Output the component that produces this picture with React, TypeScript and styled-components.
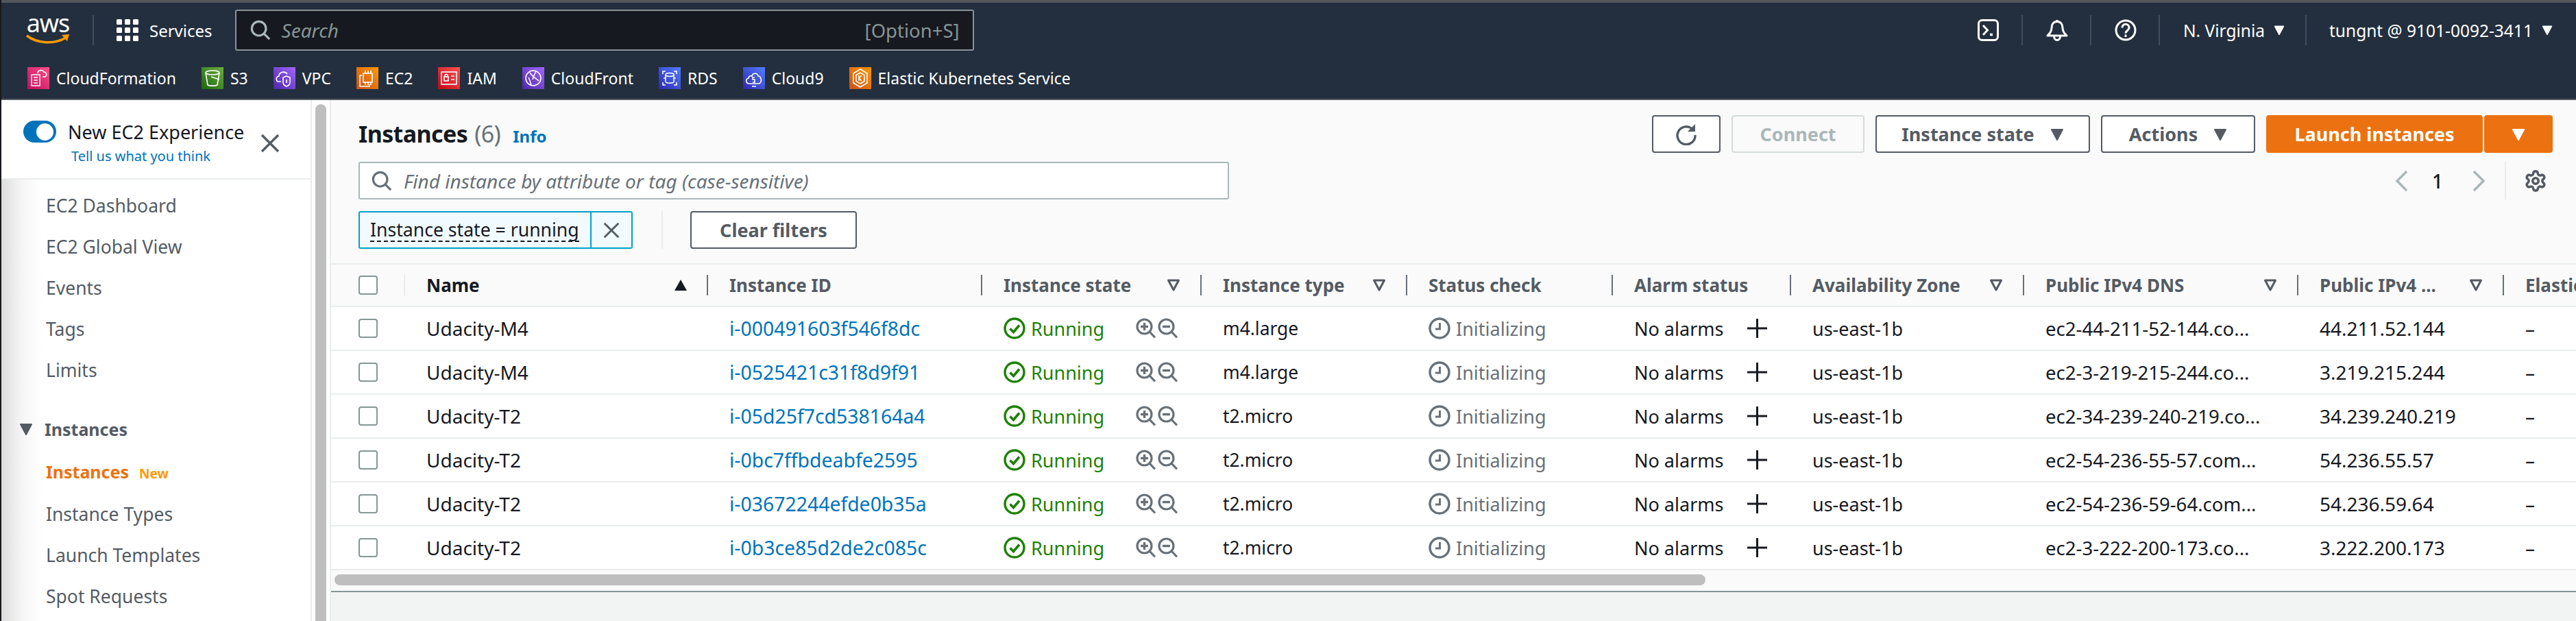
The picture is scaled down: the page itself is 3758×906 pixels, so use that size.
import React from "react";
import styled, { createGlobalStyle } from "styled-components";
import { Settings } from "lucide-react";

const FONT = `"Noto Sans", "Open Sans", sans-serif`;

const GlobalStyle = createGlobalStyle`
  html, body { margin: 0; padding: 0; height: 100%; overflow: hidden; background: #fff; }
  * { box-sizing: border-box; }
  body { font-family: ${FONT}; }
`;

const Page = styled.div`
  width: 3758px;
  height: 906px;
  display: flex;
  flex-direction: column;
  overflow: hidden;
  border-left: 2px solid #17191d;
`;

/* ---------- top navigation ---------- */
const Header = styled.header`
  height: 146px;
  flex: none;
  background: #232f3e;
  border-top: 4px solid #55565a;
  border-bottom: 2px solid #545b64;
`;
const NavTop = styled.div`
  height: 80px;
  display: flex;
  align-items: center;
  padding-left: 36px;
`;
const Logo = styled.div`
  width: 64px;
  display: flex;
  flex-direction: column;
  align-items: center;
  margin-right: 33px;
  color: #fff;
  font-size: 36px;
  line-height: 30px;
  letter-spacing: -1px;
  span { display: block; margin-top: -6px; }
  svg { display: block; margin-top: 1px; }
`;
const NavDivider = styled.div`
  width: 2px;
  height: 44px;
  background: #414d5c;
  flex: none;
`;
const ServicesButton = styled.div`
  display: flex;
  align-items: center;
  gap: 16px;
  margin-left: 33px;
  color: #fff;
  font-size: 24px;
`;
const SearchBox = styled.div`
  margin-left: 33px;
  width: 1078px;
  height: 60px;
  background: #16191f;
  border: 2px solid #879596;
  border-radius: 3px;
  display: flex;
  align-items: center;
  padding: 0 19px 0 20px;
  color: #879596;
  font-size: 27.5px;
  em { margin-left: 16px; font-style: italic; flex: 1; font-size: 28px; }
`;
const NavRight = styled.div`
  margin-left: auto;
  display: flex;
  align-items: center;
`;
const NavCell = styled.div<{ $width: number; $last?: boolean }>`
  width: ${(p) => p.$width}px;
  height: 44px;
  display: flex;
  align-items: center;
  gap: 13px;
  padding-left: ${(p) => (p.$last ? 33 : 34)}px;
  color: #fff;
  font-size: 24.5px;
  white-space: nowrap;
  border-right: ${(p) => (p.$last ? "none" : "2px solid #414d5c")};
`;
const FavBar = styled.div`
  height: 60px;
  display: flex;
  align-items: center;
  gap: 37px;
  padding-left: 38px;
`;
const Fav = styled.div`
  display: flex;
  align-items: center;
  gap: 10px;
  color: #fff;
  font-size: 23px;
  white-space: nowrap;
`;
const FavIcon = styled.span<{ $from: string; $to: string }>`
  width: 32px;
  height: 32px;
  display: block;
  background: linear-gradient(45deg, ${(p) => p.$from}, ${(p) => p.$to});
  svg { display: block; }
`;

/* ---------- body ---------- */
const Body = styled.div`
  flex: 1;
  display: flex;
  min-height: 0;
`;
const Sidebar = styled.aside`
  width: 453px;
  flex: none;
  background: #fff;
  border-right: 2px solid #eaeded;
  display: flex;
  flex-direction: column;
`;
const Banner = styled.div`
  height: 116px;
  flex: none;
  border-bottom: 2px solid #eaeded;
  display: flex;
  padding: 30px 0 0 32px;
`;
const Toggle = styled.div`
  width: 48px;
  height: 32px;
  flex: none;
  border-radius: 16px;
  background: #0073bb;
  display: flex;
  align-items: center;
  justify-content: flex-end;
  padding-right: 4px;
  &::after {
    content: "";
    width: 25px;
    height: 25px;
    border-radius: 50%;
    background: #fff;
  }
`;
const BannerText = styled.div`
  margin-left: 17px;
  width: 281px;
  font-size: 27px;
  line-height: 34px;
  white-space: nowrap;
  color: #16191f;
  a {
    display: block;
    margin: 3px 0 0 5px;
    font-size: 20px;
    line-height: 30px;
    color: #0073bb;
  }
`;
const BannerClose = styled.div`
  margin-top: 19px;
  color: #545b64;
  svg { display: block; }
`;
const SideNav = styled.nav`
  flex: 1;
  padding-top: 8px;
  background: linear-gradient(90deg, #dcdcdc 0, #f6f6f6 30px, #fff 60px);
  overflow: hidden;
`;
const SideItem = styled.div<{ $active?: boolean }>`
  height: ${(p) => (p.$active ? 64 : 60)}px;
  display: flex;
  align-items: center;
  padding-left: 65px;
  font-size: ${(p) => (p.$active ? 25 : 26.5)}px;
  font-weight: ${(p) => (p.$active ? 700 : 400)};
  color: ${(p) => (p.$active ? "#ec7211" : "#545b64")};
  small {
    margin-left: 15px;
    font-size: 19px;
    font-weight: 700;
    color: #ff9900;
    transform: translateY(3px);
  }
`;
const SideSection = styled.div`
  height: 60px;
  margin-top: 26px;
  display: flex;
  align-items: center;
  gap: 17px;
  padding-left: 26px;
  font-size: 25px;
  font-weight: 700;
  color: #545b64;
`;
const Gutter = styled.div`
  width: 28px;
  flex: none;
  padding: 6px 6px 0 5px;
  background: #fff;
  border-right: 2px solid #eaeded;
`;
const GutterThumb = styled.div`
  height: 100%;
  width: 16px;
  border-radius: 8px 8px 0 0;
  background: #bebebe;
`;

/* ---------- main ---------- */
const Main = styled.main`
  flex: 1;
  min-width: 0;
  display: flex;
  flex-direction: column;
  background: #f2f3f3;
`;
const Panel = styled.section`
  background: #fafafa;
  border-bottom: 2px solid #879596;
  height: 718px;
  flex: none;
`;
const Controls = styled.div`
  padding: 22px 34px 21px 40px;
`;
const TitleRow = styled.div`
  display: flex;
  align-items: center;
  height: 55px;
`;
const Title = styled.h1`
  margin: 0;
  font-size: 34px;
  line-height: 55px;
  font-weight: 700;
  letter-spacing: -0.6px;
  color: #16191f;
  span { font-weight: 400; color: #687078; margin-left: 10px; }
`;
const InfoLink = styled.a`
  margin: 6px 0 0 18px;
  font-size: 24px;
  font-weight: 700;
  color: #0073bb;
`;
const Actions = styled.div`
  margin-left: auto;
  display: flex;
  gap: 16px;
`;
const Button = styled.div<{ $variant?: "normal" | "disabled" | "primary"; $width: number }>`
  width: ${(p) => p.$width}px;
  height: 55px;
  display: flex;
  align-items: center;
  justify-content: center;
  gap: 23px;
  border-radius: 4px;
  font-size: 27px;
  font-weight: 700;
  white-space: nowrap;
  background: ${(p) => (p.$variant === "primary" ? "#ec7211" : p.$variant === "disabled" ? "#fafafa" : "#fff")};
  color: ${(p) => (p.$variant === "primary" ? "#fff" : p.$variant === "disabled" ? "#aab7b8" : "#545b64")};
  border: 2px solid ${(p) => (p.$variant === "primary" ? "#ec7211" : p.$variant === "disabled" ? "#d5dbdb" : "#545b64")};
`;
const SplitButton = styled.div`
  display: flex;
  gap: 2px;
`;
const FilterRow = styled.div`
  margin-top: 13px;
  display: flex;
  align-items: center;
  height: 55px;
`;
const FindInput = styled.div`
  width: 1270px;
  height: 55px;
  background: #fff;
  border: 2px solid #aab7b8;
  border-radius: 3px;
  display: flex;
  align-items: center;
  gap: 17px;
  padding-left: 17px;
  color: #687078;
  font-size: 28px;
  font-style: italic;
`;
const Pager = styled.div`
  margin-left: auto;
  display: flex;
  align-items: center;
  height: 55px;
  font-size: 28px;
  font-weight: 500;
  color: #16191f;
  b { font-weight: 500; margin: 0 43px 0 35px; }
`;
const PagerGear = styled.div`
  margin-left: 28px;
  height: 55px;
  border-left: 2px solid #eaeded;
  padding: 0 8px 0 26px;
  display: flex;
  align-items: center;
  color: #545b64;
`;
const TokenRow = styled.div`
  margin-top: 17px;
  display: flex;
  align-items: center;
  height: 55px;
`;
const Token = styled.div`
  width: 400px;
  height: 55px;
  display: flex;
  background: #f1faff;
  border: 2px solid #00a1c9;
  border-radius: 3px;
  color: #16191f;
  font-size: 26.6px;
`;
const TokenLabel = styled.div`
  width: 338px;
  padding-left: 15px;
  border-right: 2px solid #00a1c9;
  display: flex;
  align-items: center;
  white-space: nowrap;
  span { border-bottom: 2px dashed #16191f; line-height: 32px; }
`;
const TokenClose = styled.div`
  flex: 1;
  display: flex;
  align-items: center;
  justify-content: center;
  color: #545b64;
`;
const TokenDivider = styled.div`
  width: 2px;
  height: 55px;
  margin: 0 40px 0 42px;
  background: #eaeded;
`;

const TableScroll = styled.div`
  overflow: hidden;
  border-top: 2px solid #eaeded;
`;
const Grid = styled.div`
  display: grid;
  grid-template-columns: 106px 442px 400px 320px 300px 300px 260px 340px 400px 300px 300px;
  width: 3270px;
`;
const HeadCell = styled.div<{ $dark?: boolean; $light?: boolean }>`
  height: 62px;
  display: flex;
  align-items: center;
  padding-right: 29px;
  border-bottom: 2px solid #eaeded;
  background: #fafafa;
  font-size: 26px;
  font-weight: 700;
  white-space: nowrap;
  color: ${(p) => (p.$dark ? "#16191f" : "#545b64")};
  &::before {
    content: "";
    width: 2px;
    height: 30px;
    flex: none;
    margin-right: 31px;
    background: ${(p) => (p.$light ? "#eaeded" : "#687078")};
  }
  svg { margin-left: auto; flex: none; }
`;
const CheckCell = styled.div<{ $head?: boolean }>`
  height: ${(p) => (p.$head ? 62 : 64)}px;
  display: flex;
  align-items: center;
  padding-left: 40px;
  border-bottom: 2px solid #eaeded;
  background: ${(p) => (p.$head ? "#fafafa" : "#fff")};
`;
const Checkbox = styled.div`
  width: 28px;
  height: 28px;
  background: #fff;
  border: 2px solid #879596;
  border-radius: 4px;
`;
const Cell = styled.div<{ $tone?: "link" | "ok" | "muted"; $size?: number }>`
  height: 64px;
  display: flex;
  align-items: center;
  padding-left: 33px;
  border-bottom: 2px solid #eaeded;
  background: #fff;
  font-size: ${(p) => p.$size ?? 28}px;
  white-space: nowrap;
  overflow: hidden;
  color: ${(p) => (p.$tone === "link" ? "#0073bb" : p.$tone === "ok" ? "#1d8102" : p.$tone === "muted" ? "#687078" : "#16191f")};
  svg { flex: none; }
`;
const StatusLabel = styled.span`
  margin-left: 8px;
  font-size: 27px;
`;
const ZoomIcons = styled.span`
  margin: 0 33px 0 auto;
  display: flex;
  gap: 3px;
  color: #687078;
`;
const PlusIcon = styled.span`
  margin: 0 33px 0 auto;
  color: #16191f;
  svg { display: block; }
`;
const ScrollTrack = styled.div`
  padding: 6px 0 6px 5px;
`;
const ScrollThumb = styled.div`
  width: 2000px;
  height: 16px;
  border-radius: 8px;
  background: #bebebe;
`;

/* ---------- drawings ---------- */
const Caret = ({ color = "currentColor", w = 20 }: { color?: string; w?: number }) => (
  <svg width={w} height={w} viewBox="0 0 20 20" fill={color} stroke={color} strokeWidth="2" strokeLinejoin="round">
    <path d="M2 3h16l-8 15z" />
  </svg>
);
const FilterIcon = () => (
  <svg width="20" height="20" viewBox="0 0 20 20" fill="none" stroke="#545b64" strokeWidth="3" strokeLinejoin="round">
    <path d="M2.500 3h15L10 17z" />
  </svg>
);
const SortUp = () => (
  <svg width="18" height="18" viewBox="0 0 18 18" fill="#16191f">
    <path d="M9 1l9 16H0z" />
  </svg>
);
const Magnifier = ({ size = 32, color = "currentColor" }: { size?: number; color?: string }) => (
  <svg width={size} height={size} viewBox="0 0 32 32" fill="none" stroke={color} strokeWidth="3.400">
    <circle cx="13.500" cy="13.500" r="11" />
    <path d="M21.500 21.500L30 30" />
  </svg>
);
const CloseX = ({ size = 28 }: { size?: number }) => (
  <svg width={size} height={size} viewBox="0 0 28 28" fill="none" stroke="currentColor" strokeWidth="3.400">
    <path d="M2 2l24 24M26 2L2 26" />
  </svg>
);
const CheckCircle = () => (
  <svg width="32" height="32" viewBox="0 0 32 32" fill="none" stroke="#1d8102" strokeWidth="3.400">
    <circle cx="16" cy="16" r="14" />
    <path d="M9.500 16.500l5 5 8.500-10" strokeWidth="3.600" />
  </svg>
);
const ClockCircle = () => (
  <svg width="32" height="32" viewBox="0 0 32 32" fill="none" stroke="#687078" strokeWidth="3.400">
    <circle cx="16" cy="16" r="14" />
    <path d="M16.500 8v9H10" strokeWidth="3" />
  </svg>
);
const ZoomGlass = ({ plus }: { plus?: boolean }) => (
  <svg width="29" height="30" viewBox="0 0 29 30" fill="none" stroke="currentColor" strokeWidth="3.200">
    <circle cx="12.500" cy="12.500" r="10.500" />
    <path d="M20 20l8 8.500" />
    <path d="M7 12.500h11" strokeWidth="3.400" />
    {plus && <path d="M12.500 7v11" strokeWidth="3.400" />}
  </svg>
);
const PlusGlyph = () => (
  <svg width="29" height="28" viewBox="0 0 29 28" fill="none" stroke="currentColor" strokeWidth="3">
    <path d="M14.500 0v28M0 14h29" />
  </svg>
);
const GridDots = () => (
  <svg width="32" height="32" viewBox="0 0 32 32" fill="#fff">
    {[0, 12, 24].flatMap((y) =>
      [0, 12, 24].map((x) => <rect key={`${x}-${y}`} x={x} y={y} width="8" height="8" rx="1.500" />)
    )}
  </svg>
);
const TerminalIcon = () => (
  <svg width="31" height="32" viewBox="0 0 31 32" fill="none" stroke="#fff" strokeWidth="3">
    <rect x="1.500" y="1.500" width="28" height="29" rx="5" />
    <path d="M8 9l6.500 7L8 23" />
    <path d="M18 22.500h4" strokeWidth="3.500" />
  </svg>
);
const BellIcon = () => (
  <svg width="32" height="32" viewBox="0 0 32 32" fill="none" stroke="#fff" strokeWidth="3" strokeLinejoin="round">
    <path d="M16 3.500c-5.500 0-8 4-8 9 0 5-2 8-6 11.500h28c-4-3.500-6-6.500-6-11.500 0-5-2.500-9-8-9z" />
    <path d="M16 1v3M11.500 24.500c0 8 9 8 9 0" />
  </svg>
);
const HelpIcon = () => (
  <svg width="32" height="32" viewBox="0 0 32 32" fill="none" stroke="#fff" strokeWidth="3">
    <circle cx="16" cy="16" r="14" />
    <path d="M11 12.500c0-7 10-7 10 0 0 4-5 4-5 8" />
    <path d="M16 22.500v3.500" />
  </svg>
);
const RefreshIcon = () => (
  <svg width="32" height="32" viewBox="0 0 32 32" fill="none" stroke="#545b64" strokeWidth="3.400">
    <path d="M24 7.500A13 13 0 1 0 29 17" />
    <path d="M29 1v11H18z" fill="#545b64" stroke="none" />
  </svg>
);
const Chevron = ({ dir }: { dir: "left" | "right" }) => (
  <svg width="19" height="32" viewBox="0 0 19 32" fill="none" stroke="#aab7b8" strokeWidth="3.500">
    <path d={dir === "left" ? "M17 2L3 16l14 14" : "M2 2l14 14L2 30"} />
  </svg>
);

const glyph: Record<string, React.ReactNode> = {
  CloudFormation: (
    <>
      <path d="M6 11h12v16H6zM9 15h6M9 19h6M9 23h6" />
      <path d="M15 9c0-5 7-6 9-2 4 0 5 5 2 7h-4" />
    </>
  ),
  S3: (
    <>
      <path d="M6 8l3 18c2 1.500 12 1.500 14 0l3-18" />
      <ellipse cx="16" cy="8" rx="10" ry="3" />
      <path d="M14 14l12 4" />
    </>
  ),
  VPC: (
    <>
      <path d="M11 21H8c-5 0-5-7 0-8 0-6 9-8 12-3" />
      <path d="M19 13l5 2v7c0 3-2 5-5 6-3-1-5-3-5-6v-7z" />
      <path d="M19 18v5" />
    </>
  ),
  EC2: (
    <>
      <rect x="10" y="9" width="13" height="13" />
      <path d="M13 5v4M17 5v4M21 5v4M13 22v4M17 22v4M21 22v4" />
      <path d="M8 12H5v16h14v-3" />
    </>
  ),
  IAM: (
    <>
      <rect x="5" y="7" width="22" height="18" />
      <rect x="9" y="14" width="6" height="6" />
      <path d="M10 14v-2c0-2 4-2 4 0v2M19 13h5M19 18h5" />
    </>
  ),
  CloudFront: (
    <>
      <circle cx="16" cy="16" r="11" />
      <path d="M11 8c3 5 8 8 13 12M9 15c2 4 3 7 4 11M20 6c-2 4-4 8-5 12" />
    </>
  ),
  RDS: (
    <>
      <path d="M6 10V6h4M22 6h4v4M26 22v4h-4M10 26H6v-4" />
      <ellipse cx="16" cy="11" rx="6" ry="2.500" />
      <path d="M10 11v10c0 3 12 3 12 0V11M7 16h3M22 16h3" />
    </>
  ),
  Cloud9: (
    <>
      <path d="M9 24c-5 0-6-7-1-8 0-3 3-4 5-3 1-5 8-5 9 0 5 0 6 10 1 11z" />
      <path d="M13 28h6" />
      <path d="M17 15h-3v3h3v4h-3" />
    </>
  ),
  "Elastic Kubernetes Service": (
    <>
      <path d="M16 3l10 6v14l-10 6-10-6V9z" />
      <path d="M16 8l6 3.500v9L16 24l-6-3.500v-9z" />
      <path d="M14 12v8M18 12l-4 4 4 4" />
    </>
  ),
};

const favorites: [string, string, string][] = [
  ["CloudFormation", "#bd0f5c", "#ff4f8b"],
  ["S3", "#1b660f", "#6cae3e"],
  ["VPC", "#4d27a8", "#a166ff"],
  ["EC2", "#c8511b", "#ff9900"],
  ["IAM", "#bd0816", "#ff5252"],
  ["CloudFront", "#4d27a8", "#a166ff"],
  ["RDS", "#2e27ad", "#527fff"],
  ["Cloud9", "#2e27ad", "#527fff"],
  ["Elastic Kubernetes Service", "#c8511b", "#ff9900"],
];

const columns: { label: string; filter?: boolean; sort?: boolean }[] = [
  { label: "Name", sort: true },
  { label: "Instance ID" },
  { label: "Instance state", filter: true },
  { label: "Instance type", filter: true },
  { label: "Status check" },
  { label: "Alarm status" },
  { label: "Availability Zone", filter: true },
  { label: "Public IPv4 DNS", filter: true },
  { label: "Public IPv4 ...", filter: true },
  { label: "Elastic IP" },
];

const rows = [
  ["Udacity-M4", "i-000491603f546f8dc", "m4.large", "ec2-44-211-52-144.co...", "44.211.52.144"],
  ["Udacity-M4", "i-0525421c31f8d9f91", "m4.large", "ec2-3-219-215-244.co...", "3.219.215.244"],
  ["Udacity-T2", "i-05d25f7cd538164a4", "t2.micro", "ec2-34-239-240-219.co...", "34.239.240.219"],
  ["Udacity-T2", "i-0bc7ffbdeabfe2595", "t2.micro", "ec2-54-236-55-57.com...", "54.236.55.57"],
  ["Udacity-T2", "i-03672244efde0b35a", "t2.micro", "ec2-54-236-59-64.com...", "54.236.59.64"],
  ["Udacity-T2", "i-0b3ce85d2de2c085c", "t2.micro", "ec2-3-222-200-173.co...", "3.222.200.173"],
];

const App = () => {
  return (
    <Page>
      <GlobalStyle />
      <Header>
        <NavTop>
          <Logo>
            <span>aws</span>
            <svg width="64" height="14" viewBox="0 0 64 14" fill="none">
              <path d="M1 2c16 12 40 13 57 3" stroke="#ff9900" strokeWidth="3.500" />
              <path d="M52 1l11-1-3 10z" fill="#ff9900" />
            </svg>
          </Logo>
          <NavDivider />
          <ServicesButton>
            <GridDots />
            Services
          </ServicesButton>
          <SearchBox>
            <Magnifier size={30} color="#aab7b8" />
            <em>Search</em>
            [Option+S]
          </SearchBox>
          <NavRight>
            <NavCell $width={100}><TerminalIcon /></NavCell>
            <NavCell $width={100}><BellIcon /></NavCell>
            <NavCell $width={100}><HelpIcon /></NavCell>
            <NavCell $width={214}>N. Virginia <Caret color="#fff" w={16} /></NavCell>
            <NavCell $width={393} $last>tungnt @ 9101-0092-3411 <Caret color="#fff" w={16} /></NavCell>
          </NavRight>
        </NavTop>
        <FavBar>
          {favorites.map(([name, from, to]) => (
            <Fav key={name}>
              <FavIcon $from={from} $to={to}>
                <svg width="32" height="32" viewBox="0 0 32 32" fill="none" stroke="#fff" strokeWidth="1.600">
                  {glyph[name]}
                </svg>
              </FavIcon>
              {name}
            </Fav>
          ))}
        </FavBar>
      </Header>
      <Body>
        <Sidebar>
          <Banner>
            <Toggle />
            <BannerText>
              New EC2 Experience
              <a>Tell us what you think</a>
            </BannerText>
            <BannerClose><CloseX /></BannerClose>
          </Banner>
          <SideNav>
            <SideItem>EC2 Dashboard</SideItem>
            <SideItem>EC2 Global View</SideItem>
            <SideItem>Events</SideItem>
            <SideItem>Tags</SideItem>
            <SideItem>Limits</SideItem>
            <SideSection>
              <Caret color="#545b64" />
              Instances
            </SideSection>
            <SideItem $active>
              Instances<small>New</small>
            </SideItem>
            <SideItem>Instance Types</SideItem>
            <SideItem>Launch Templates</SideItem>
            <SideItem>Spot Requests</SideItem>
          </SideNav>
        </Sidebar>
        <Gutter>
          <GutterThumb />
        </Gutter>
        <Main>
          <Panel>
            <Controls>
              <TitleRow>
                <Title>
                  Instances<span>(6)</span>
                </Title>
                <InfoLink>Info</InfoLink>
                <Actions>
                  <Button $width={100}><RefreshIcon /></Button>
                  <Button $width={194} $variant="disabled">Connect</Button>
                  <Button $width={313}>Instance state <Caret /></Button>
                  <Button $width={225}>Actions <Caret /></Button>
                  <SplitButton>
                    <Button $width={316} $variant="primary">Launch instances</Button>
                    <Button $width={100} $variant="primary"><Caret /></Button>
                  </SplitButton>
                </Actions>
              </TitleRow>
              <FilterRow>
                <FindInput>
                  <Magnifier size={30} color="#687078" />
                  Find instance by attribute or tag (case-sensitive)
                </FindInput>
                <Pager>
                  <Chevron dir="left" />
                  <b>1</b>
                  <Chevron dir="right" />
                  <PagerGear><Settings size={34} strokeWidth={2.500} /></PagerGear>
                </Pager>
              </FilterRow>
              <TokenRow>
                <Token>
                  <TokenLabel><span>Instance state = running</span></TokenLabel>
                  <TokenClose><CloseX size={24} /></TokenClose>
                </Token>
                <TokenDivider />
                <Button $width={243}>Clear filters</Button>
              </TokenRow>
            </Controls>
            <TableScroll>
              <Grid>
                <CheckCell $head><Checkbox /></CheckCell>
                {columns.map((c, i) => (
                  <HeadCell key={c.label} $dark={i === 0} $light={i === 0}>
                    {c.label}
                    {c.filter && <FilterIcon />}
                    {c.sort && <SortUp />}
                  </HeadCell>
                ))}
                {rows.map(([name, id, type, dns, ip]) => (
                  <React.Fragment key={id}>
                    <CheckCell><Checkbox /></CheckCell>
                    <Cell>{name}</Cell>
                    <Cell $tone="link" $size={28.4}>{id}</Cell>
                    <Cell $tone="ok">
                      <CheckCircle />
                      <StatusLabel>Running</StatusLabel>
                      <ZoomIcons>
                        <ZoomGlass plus />
                        <ZoomGlass />
                      </ZoomIcons>
                    </Cell>
                    <Cell $size={26.4}>{type}</Cell>
                    <Cell $tone="muted">
                      <ClockCircle />
                      <StatusLabel>Initializing</StatusLabel>
                    </Cell>
                    <Cell $size={27}>
                      No alarms
                      <PlusIcon><PlusGlyph /></PlusIcon>
                    </Cell>
                    <Cell $size={27}>us-east-1b</Cell>
                    <Cell $size={27.6}>{dns}</Cell>
                    <Cell>{ip}</Cell>
                    <Cell>–</Cell>
                  </React.Fragment>
                ))}
              </Grid>
              <ScrollTrack>
                <ScrollThumb />
              </ScrollTrack>
            </TableScroll>
          </Panel>
        </Main>
      </Body>
    </Page>
  );
};

export default App;
